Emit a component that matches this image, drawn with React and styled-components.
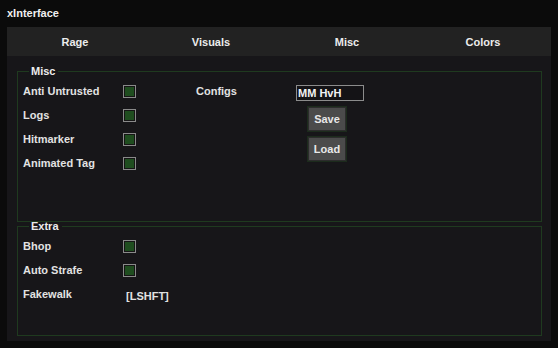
import styled, { createGlobalStyle } from "styled-components";

const GlobalStyle = createGlobalStyle`
    body {
        margin: 0;
        background-color: #0b0b0b;
        font-family: "Liberation Sans", Arial, sans-serif;
        font-weight: 700;
        font-size: 11px;
        color: #e4e4e4;
    }
`;

const tabs = ["Rage", "Visuals", "Misc", "Colors"];

export default function App() {
    return (
        <>
            <GlobalStyle />
            <Window>
                <TitleBar>xInterface</TitleBar>
                <Panel>
                    <TabBar>
                        {tabs.map((t) => (
                            <Tab key={t}>{t}</Tab>
                        ))}
                    </TabBar>
                    <Content>
                        <Group height="157px" top="8px">
                            <Legend>Misc</Legend>
                            <Columns>
                                <Column>
                                    <Row>
                                        <Label>Anti Untrusted</Label>
                                        <Checkbox />
                                    </Row>
                                    <Row>
                                        <Label>Logs</Label>
                                        <Checkbox />
                                    </Row>
                                    <Row>
                                        <Label>Hitmarker</Label>
                                        <Checkbox />
                                    </Row>
                                    <Row>
                                        <Label>Animated Tag</Label>
                                        <Checkbox />
                                    </Row>
                                </Column>
                                <ConfigArea>
                                    <Row>
                                        <Label>Configs</Label>
                                        <TextBox defaultValue="MM HvH" />
                                    </Row>
                                    <Buttons>
                                        <Button>Save</Button>
                                        <Button>Load</Button>
                                    </Buttons>
                                </ConfigArea>
                            </Columns>
                        </Group>
                        <Group height="116px" top="8px" shift="-2px">
                            <Legend>Extra</Legend>
                            <Column>
                                <Row>
                                    <Label>Bhop</Label>
                                    <Checkbox />
                                </Row>
                                <Row>
                                    <Label>Auto Strafe</Label>
                                    <Checkbox />
                                </Row>
                                <Row>
                                    <Label>Fakewalk</Label>
                                    <KeyBind>[LSHFT]</KeyBind>
                                </Row>
                            </Column>
                        </Group>
                    </Content>
                </Panel>
            </Window>
        </>
    );
}

const Window = styled.div`
    width: 558px;
    height: 348px;
    display: flex;
    flex-direction: column;
    padding: 0 7px;
    box-sizing: border-box;
`;

const TitleBar = styled.div`
    height: 27px;
    line-height: 27px;
    color: #f0f0f0;
`;

const Panel = styled.div`
    width: 544px;
    height: 314px;
    background-color: #171619;
    display: flex;
    flex-direction: column;
`;

const TabBar = styled.div`
    height: 29px;
    background-color: #222222;
    display: grid;
    grid-template-columns: repeat(4, 1fr);
`;

const Tab = styled.div`
    display: flex;
    align-items: center;
    justify-content: center;
    color: #ececec;
`;

const Content = styled.div`
    flex: 1;
    padding: 9px 9px 0 10px;
    display: flex;
    flex-direction: column;
`;

const Group = styled.fieldset`
    margin: ${(props) => props.shift || "0"} 0 0 0;
    padding: ${(props) => props.top} 5px 0 5px;
    height: ${(props) => props.height};
    box-sizing: border-box;
    border: 1px solid #1f3a1f;
`;

const Legend = styled.legend`
    margin-left: 6px;
    padding: 0 3px 0 2px;
    line-height: 12px;
    color: #ececec;
`;

const Columns = styled.div`
    display: flex;
`;

const Column = styled.div`
    width: 173px;
    display: flex;
    flex-direction: column;
    gap: 11px;
`;

const Row = styled.div`
    display: flex;
    align-items: flex-start;
    height: 13px;
`;

const Label = styled.span`
    width: 100px;
    line-height: 13px;
    flex-shrink: 0;
    color: #e2e2e2;
`;

const Checkbox = styled.span`
    width: 13px;
    height: 13px;
    box-sizing: border-box;
    border: 1px solid #8a8a8a;
    background-color: #1f4d1f;
    box-shadow: inset 0 0 0 1px #151515;
`;

const KeyBind = styled.span`
    line-height: 13px;
    margin-left: 3px;
    margin-top: 2px;
    color: #e2e2e2;
`;

const ConfigArea = styled.div`
    display: flex;
    flex-direction: column;
`;

const TextBox = styled.input`
    width: 68px;
    height: 16px;
    box-sizing: border-box;
    margin: 0;
    padding: 0 1px;
    border: 1px solid #8c8c8c;
    background-color: #141316;
    color: #f2f2f2;
    font-family: inherit;
    font-weight: 700;
    font-size: 11px;
    outline: none;
`;

const Buttons = styled.div`
    display: flex;
    flex-direction: column;
    gap: 4px;
    margin: 8px 0 0 111px;
`;

const Button = styled.button`
    width: 40px;
    height: 26px;
    margin: 0;
    padding: 0;
    border: 1px solid #1c2b1c;
    box-shadow: inset 0 0 0 1px #2c2c2c;
    background-color: #4b4b4b;
    color: #e8e8e8;
    font-family: inherit;
    font-weight: 700;
    font-size: 11px;
`;
